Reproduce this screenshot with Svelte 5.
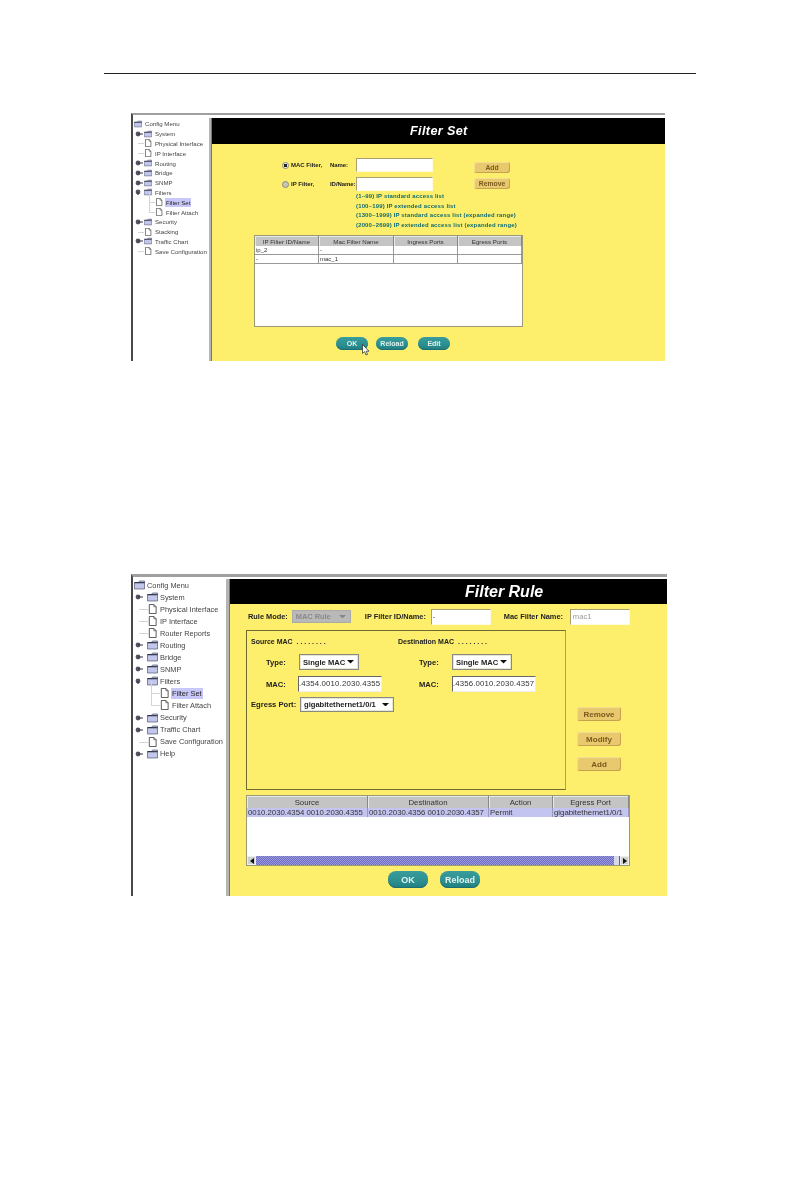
<script lang="ts">
	type Row = { label: string; level: number; kind: 'folder' | 'doc'; toggle?: 'closed' | 'open'; selected?: boolean };

	const folder = (label: string, toggle: 'closed' | 'open' = 'closed'): Row => ({ label, level: 1, kind: 'folder', toggle });
	const doc = (label: string, level = 1, selected = false): Row => ({ label, level, kind: 'doc', selected });
	const root: Row = { label: 'Config Menu', level: 0, kind: 'folder' };

	const setTree: Row[] = [
		root,
		folder('System'),
		doc('Physical Interface'),
		doc('IP Interface'),
		folder('Routing'),
		folder('Bridge'),
		folder('SNMP'),
		folder('Filters', 'open'),
		doc('Filter Set', 2, true),
		doc('Filter Attach', 2),
		folder('Security'),
		doc('Stacking'),
		folder('Traffic Chart'),
		doc('Save Configuration')
	];

	const ruleTree: Row[] = [
		root,
		folder('System'),
		doc('Physical Interface'),
		doc('IP Interface'),
		doc('Router Reports'),
		folder('Routing'),
		folder('Bridge'),
		folder('SNMP'),
		folder('Filters', 'open'),
		doc('Filter Set', 2, true),
		doc('Filter Attach', 2),
		folder('Security'),
		folder('Traffic Chart'),
		doc('Save Configuration'),
		folder('Help')
	];

	const hints = [
		'(1~99) IP standard access list',
		'(100~199) IP extended access list',
		'(1300~1999) IP standard access list (expanded range)',
		'(2000~2699) IP extended access list (expanded range)'
	];
</script>

{#snippet tree(rows: Row[], cls: string)}
	<nav class="tree {cls}">
		{#each rows as row}
			<div class="row lvl-{row.level} {row.kind}">
				{#if row.toggle}
					<svg class="toggle" viewBox="0 0 8 6">
						<circle cx="3" cy="3" r="2.4" fill="#556" />
						<path d={row.toggle === 'open' ? 'M3 3V6' : 'M3 3H8'} stroke="#334" fill="none" />
					</svg>
				{/if}
				{#if row.kind === 'folder'}
					<svg class="icon" viewBox="0 0 11 9">
						<path d="M0.5 2H4.5L5.5 0.5H10.5V8.5H0.5Z" fill="#c2c6ea" stroke="#3a3f58" stroke-width="0.6" />
						<path d="M0.5 2.2H10.5" stroke="#23263c" stroke-width="1.1" />
					</svg>
				{:else}
					<svg class="icon" viewBox="0 0 11 11">
						<path d="M2 0.5H7L9.5 3V10.5H2Z" fill="#fff" stroke="#222" stroke-width="0.8" />
						<path d="M7 0.5V3H9.5" fill="none" stroke="#222" stroke-width="0.6" />
					</svg>
				{/if}
				<span class="label" class:selected={row.selected}>{row.label}</span>
			</div>
		{/each}
	</nav>
{/snippet}

{#snippet arrow()}
	<svg class="arrow" viewBox="0 0 8 4"><path d="M0 0H8L4 4Z" /></svg>
{/snippet}

<main class="page">
	<hr class="rule" />

	<section class="window set">
		{@render tree(setTree, 'tree-set')}
		<div class="splitter"></div>
		<div class="panel">
			<h1>Filter Set</h1>

			<div class="set-form">
				<div class="set-fields">
					<div class="set-row">
						<span class="radio on"></span>
						<b class="set-type">MAC Filter,</b>
						<b class="set-name">Name:</b>
						<input class="text" readonly />
					</div>
					<div class="set-row">
						<span class="radio"></span>
						<b class="set-type">IP Filter,</b>
						<b class="set-name">ID/Name:</b>
						<input class="text" readonly />
					</div>
				</div>
				<div class="set-side">
					<button class="tan">Add</button>
					<button class="tan">Remove</button>
				</div>
			</div>

			<ul class="hints">
				{#each hints as hint}
					<li>{hint}</li>
				{/each}
			</ul>

			<div class="grid set-grid">
				<table>
					<thead>
						<tr>
							<th>IP Filter ID/Name</th>
							<th>Mac Filter Name</th>
							<th>Ingress Ports</th>
							<th>Egress Ports</th>
						</tr>
					</thead>
					<tbody>
						<tr><td>ip_2</td><td>-</td><td></td><td></td></tr>
						<tr><td>-</td><td>mac_1</td><td></td><td></td></tr>
					</tbody>
				</table>
			</div>

			<div class="actions set-actions">
				<button class="teal ok">
					OK
					<svg class="cursor" viewBox="0 0 8 12">
						<path d="M0.5 0.5V9.5L2.6 7.6L4 11L5.5 10.4L4.2 7.2H7Z" fill="#fff" stroke="#222" stroke-width="0.7" />
					</svg>
				</button>
				<button class="teal">Reload</button>
				<button class="teal edit">Edit</button>
			</div>
		</div>
	</section>

	<section class="window rule-win">
		{@render tree(ruleTree, 'tree-rule')}
		<div class="splitter"></div>
		<div class="panel">
			<h1>Filter Rule</h1>

			<div class="rule-top">
				<b>Rule Mode:</b>
				<div class="select disabled mode">MAC Rule {@render arrow()}</div>
				<b class="id-label">IP Filter ID/Name:</b>
				<div class="field top-field">-</div>
				<b class="mac-label">Mac Filter Name:</b>
				<div class="field top-field dim">mac1</div>
			</div>

			<div class="middle">
				<fieldset class="group">
					<div class="side-col src">
						<b class="heading">Source MAC &nbsp;. . . . . . . .</b>
						<div class="pair">
							<b class="pair-label">Type:</b>
							<div class="select type">Single MAC {@render arrow()}</div>
						</div>
						<div class="pair">
							<b class="pair-label">MAC:</b>
							<div class="field mac">.4354.0010.2030.4355</div>
						</div>
						<div class="egress">
							<b>Egress Port:</b>
							<div class="select port">gigabitethernet1/0/1 {@render arrow()}</div>
						</div>
					</div>
					<div class="side-col dst">
						<b class="heading">Destination MAC &nbsp;. . . . . . . .</b>
						<div class="pair">
							<b class="pair-label">Type:</b>
							<div class="select type">Single MAC {@render arrow()}</div>
						</div>
						<div class="pair">
							<b class="pair-label">MAC:</b>
							<div class="field mac">.4356.0010.2030.4357</div>
						</div>
					</div>
				</fieldset>
				<div class="rule-side">
					<button class="tan">Remove</button>
					<button class="tan">Modify</button>
					<button class="tan">Add</button>
				</div>
			</div>

			<div class="grid rule-grid">
				<table>
					<thead>
						<tr>
							<th>Source</th>
							<th>Destination</th>
							<th>Action</th>
							<th>Egress Port</th>
						</tr>
					</thead>
					<tbody>
						<tr class="picked">
							<td>0010.2030.4354 0010.2030.4355</td>
							<td>0010.2030.4356 0010.2030.4357</td>
							<td>Permit</td>
							<td>gigabitethernet1/0/1</td>
						</tr>
					</tbody>
				</table>
				<div class="scrollbar">
					<span class="end"><i class="left"></i></span>
					<span class="thumb"></span>
					<span class="grip"></span>
					<span class="end"><i class="right"></i></span>
				</div>
			</div>

			<div class="actions rule-actions">
				<button class="teal">OK</button>
				<button class="teal">Reload</button>
			</div>
		</div>
	</section>
</main>

<style>
	:global(body) {
		background: #fff;
	}

	.page {
		padding-top: 73px;
		height: 1118px;
		font-family: 'Liberation Sans', Arial, sans-serif;
	}

	.rule {
		margin: 0 0 0 104px;
		width: 592px;
		height: 1px;
		border: 0;
		background: #222;
	}

	.window {
		margin-left: 131px;
		display: flex;
		box-sizing: border-box;
		border-top: 2px solid #a0a0a0;
		border-left: 2px solid #484848;
		padding-top: 3px;
		filter: blur(0.35px);
	}

	.window.set {
		margin-top: 39px;
		width: 534px;
		height: 248px;
	}

	.window.rule-win {
		margin-top: 213px;
		width: 536px;
		height: 322px;
		border-top-width: 3px;
		padding-top: 2px;
	}

	/* tree */
	.tree {
		background: #fff;
		color: #444;
		flex: none;
		overflow: hidden;
	}

	.row {
		position: relative;
		display: flex;
		align-items: center;
		white-space: nowrap;
	}

	.icon {
		flex: none;
	}

	/* connector lines */
	.row.doc::before {
		content: '';
		position: absolute;
		top: 50%;
		height: 1px;
		background: #cfd6d6;
	}

	.row.lvl-2::after {
		content: '';
		position: absolute;
		top: -50%;
		height: 100%;
		width: 1px;
		background: #cfd6d6;
	}

	.tree-set {
		width: 76px;
		font-size: 6.1px;
		padding-top: 1px;
	}

	.tree-set .row {
		height: 9.8px;
	}

	.tree-set .icon {
		width: 8px;
		height: 8px;
		margin: 0 3px 0 1px;
	}

	.tree-set .lvl-1 {
		padding-left: 10px;
	}

	.tree-set .lvl-2 {
		padding-left: 21px;
	}

	.tree-set .doc::before {
		left: 5px;
		width: 6px;
	}

	.tree-set .lvl-2::before {
		left: 16px;
	}

	.tree-set .lvl-2::after {
		left: 16px;
	}

	.tree-rule {
		width: 93px;
		font-size: 7.4px;
	}

	.tree-rule .row {
		height: 12.05px;
	}

	.tree-rule .icon {
		width: 11px;
		height: 10px;
		margin: 0 2px 0 1px;
	}

	.tree-rule .lvl-1 {
		padding-left: 13px;
	}

	.tree-rule .lvl-2 {
		padding-left: 25px;
	}

	.tree-rule .doc::before {
		left: 6px;
		width: 9px;
	}

	.tree-rule .lvl-2::before {
		left: 18px;
	}

	.tree-rule .lvl-2::after {
		left: 18px;
	}

	.toggle {
		position: absolute;
		left: 2px;
		top: 50%;
		width: 8px;
		height: 6px;
		margin-top: -3px;
	}

	.label {
		padding: 1px;
		margin-left: -1px;
	}

	.label.selected {
		background: #c8c8f8;
		color: #222;
	}

	.splitter {
		flex: none;
		background: #b4b4b4;
		border-right: 1px solid #777;
	}

	.set .splitter {
		width: 2px;
	}

	.rule-win .splitter {
		width: 3px;
	}

	/* right side */
	.panel {
		flex: 1;
		min-width: 0;
		display: flex;
		flex-direction: column;
		align-items: flex-start;
		background: #fdef6b;
		color: #222;
	}

	h1 {
		align-self: stretch;
		margin: 0;
		background: #000;
		color: #fff;
		font-style: italic;
		font-weight: 700;
		display: flex;
		align-items: center;
	}

	.set h1 {
		height: 26px;
		font-size: 12.6px;
		letter-spacing: 0.03em;
		padding-left: 198px;
	}

	.rule-win h1 {
		height: 25px;
		font-size: 16px;
		padding-left: 235px;
	}

	b {
		font-weight: 700;
		white-space: nowrap;
	}

	button {
		display: block;
		padding: 0;
		font-family: inherit;
		font-weight: 700;
		cursor: pointer;
		border: 0;
	}

	.teal {
		position: relative;
		background: linear-gradient(#3a9c9c, #2b8f90 60%, #217c80);
		color: #dff2ee;
		border-radius: 8px;
		box-shadow: inset 0 -1px 0 #1c6e72;
	}

	.tan {
		background: #e9c96e;
		color: #7a5a1e;
		border-radius: 3px;
		box-shadow: inset -1px -1px 0 #c8a24e, inset 1px 1px 0 #f3df93;
	}

	.text,
	.field {
		box-sizing: border-box;
		background: #fff;
		border: 1px solid;
		border-color: #a8a070 #fffbe0 #fffbe0 #a8a070;
		outline: none;
		padding: 0;
		margin: 0;
	}

	/* filter set */
	.set-form {
		display: flex;
		padding: 14px 0 0 73px;
	}

	.set-fields {
		display: flex;
		flex-direction: column;
		gap: 5px;
	}

	.set-row {
		display: flex;
		align-items: center;
		height: 14px;
		font-size: 6px;
	}

	.radio {
		flex: none;
		width: 7px;
		height: 7px;
		margin-left: -3px;
		border-radius: 50%;
		box-sizing: border-box;
		background: #c8c8b0;
		border: 1px solid #888;
	}

	.radio.on {
		background: radial-gradient(#222 45%, #eee 55%);
	}

	.set-type {
		width: 39px;
		margin-left: 2px;
	}

	.set-name {
		width: 26px;
		letter-spacing: -0.01em;
	}

	.text {
		width: 77px;
		height: 14px;
	}

	.set-side {
		display: flex;
		flex-direction: column;
		gap: 5px;
		margin: 4px 0 0 41px;
	}

	.set-side .tan {
		width: 36px;
		height: 11px;
		font-size: 6.8px;
	}

	.hints {
		list-style: none;
		margin: 1px 0 0 144px;
		padding: 0;
		color: #0f6a72;
		font-size: 5.95px;
		font-weight: 700;
		line-height: 9.5px;
		letter-spacing: 0.03em;
		white-space: nowrap;
	}

	.grid {
		box-sizing: border-box;
		background: #fff;
		border: 1px solid #9a9a78;
	}

	table {
		width: 100%;
		table-layout: fixed;
		border-collapse: collapse;
	}

	th {
		background: #c4c4c4;
		color: #333;
		font-weight: 400;
		padding: 0;
		border-right: 1px solid #888;
		box-shadow: inset 1px 1px 0 #e8e8e8;
	}

	td {
		padding: 0 0 0 1px;
		color: #333;
		white-space: nowrap;
		overflow: hidden;
		border-right: 1px solid #999;
	}

	.set-grid {
		margin: 5px 0 0 42px;
		width: 269px;
		height: 92px;
	}

	.set-grid th {
		height: 10px;
		font-size: 6.2px;
	}

	.set-grid td {
		height: 8px;
		font-size: 6px;
		line-height: 7px;
		border-bottom: 1px solid #999;
	}

	.set-grid th:nth-child(1),
	.set-grid th:nth-child(3),
	.set-grid th:nth-child(4) {
		width: 63px;
	}

	.actions {
		display: flex;
	}

	.set-actions {
		margin: 10px 0 0 124px;
		gap: 8px;
	}

	.set-actions .teal {
		width: 32px;
		height: 13px;
		font-size: 7px;
	}

	.set-actions .edit {
		margin-left: 2px;
	}

	.cursor {
		position: absolute;
		left: 26px;
		top: 7px;
		width: 8px;
		height: 12px;
	}

	/* filter rule */
	.rule-top {
		display: flex;
		align-items: center;
		height: 17px;
		margin: 4px 0 0 18px;
		font-size: 7.4px;
	}

	.select {
		box-sizing: border-box;
		display: flex;
		align-items: center;
		justify-content: space-between;
		background: #fff;
		border: 1px solid #888;
		box-shadow: inset 0 0 0 1px #e8e8d0;
		font-weight: 700;
		padding: 0 4px 0 3px;
		white-space: nowrap;
		color: #222;
	}

	.arrow {
		flex: none;
		width: 7px;
		height: 3.5px;
		fill: #111;
	}

	.select.disabled {
		background: #b9b9b9;
		color: #8a8a8a;
		border-color: #aaa;
		box-shadow: none;
	}

	.select.disabled .arrow {
		fill: #888;
	}

	.mode {
		width: 59px;
		height: 13px;
		margin-left: 4px;
		font-size: 7.4px;
	}

	.id-label {
		margin-left: 14px;
		width: 66px;
	}

	.top-field {
		width: 60px;
		height: 16px;
		font-size: 7.6px;
		line-height: 14px;
		padding-left: 1px;
		color: #333;
	}

	.mac-label {
		margin-left: 13px;
		width: 66px;
	}

	.top-field.dim {
		color: #999;
		padding-left: 2px;
	}

	.middle {
		display: flex;
		margin: 5px 0 0 16px;
	}

	.group {
		box-sizing: border-box;
		display: flex;
		width: 320px;
		height: 160px;
		margin: 0;
		padding: 6px 0 0 4px;
		border: 1px solid #6e6a30;
		border-right-color: #a8a060;
		font-size: 7.6px;
	}

	.side-col {
		width: 147px;
	}

	.heading {
		display: block;
		height: 11px;
		line-height: 10px;
		font-size: 7px;
	}

	.pair {
		display: flex;
		align-items: center;
		height: 16px;
		margin-top: 6px;
		padding-left: 15px;
	}

	.dst .pair {
		padding-left: 21px;
	}

	.pair-label {
		width: 33px;
	}

	.type {
		width: 60px;
		height: 16px;
		font-size: 7.6px;
	}

	.mac {
		width: 84px;
		height: 16px;
		line-height: 14px;
		font-size: 7.8px;
		letter-spacing: 0.02em;
		color: #333;
		white-space: nowrap;
		overflow: hidden;
		border-color: #666 #eee #eee #666;
	}

	.src .mac {
		margin-left: -1px;
	}

	.egress {
		display: flex;
		align-items: center;
		height: 15px;
		margin-top: 5px;
	}

	.egress b {
		width: 49px;
	}

	.port {
		width: 94px;
		height: 15px;
		font-size: 7.6px;
	}

	.rule-side {
		display: flex;
		flex-direction: column;
		gap: 11px;
		margin: 77px 0 0 11px;
	}

	.rule-side .tan {
		width: 44px;
		height: 14px;
		font-size: 8px;
	}

	.rule-grid {
		display: flex;
		flex-direction: column;
		margin: 5px 0 0 16px;
		width: 384px;
		height: 71px;
	}

	.rule-grid table {
		flex: none;
	}

	.rule-grid th {
		height: 12px;
		font-size: 7.8px;
	}

	.rule-grid td {
		height: 9px;
		font-size: 7.8px;
		line-height: 8px;
		border-right-color: #9898c0;
	}

	.rule-grid th:nth-child(1),
	.rule-grid th:nth-child(2) {
		width: 120px;
	}

	.rule-grid th:nth-child(3) {
		width: 63px;
	}

	.picked td {
		background: #c4c4f0;
	}

	.scrollbar {
		display: flex;
		margin-top: auto;
		height: 9px;
		background: #fff;
	}

	.thumb {
		flex: 1;
		background: repeating-conic-gradient(#6c6cc0 0 25%, #9a9adc 0 50%) 0 0 / 2px 2px;
	}

	.grip {
		flex: none;
		width: 5px;
		background: #d8d8e8;
		border-right: 1px solid #666;
	}

	.end {
		flex: none;
		width: 9px;
		display: flex;
		align-items: center;
		justify-content: center;
		background: #d0d0d0;
		box-shadow: inset 0 0 0 1px #eee;
	}

	.end i {
		width: 0;
		height: 0;
		border-top: 3px solid transparent;
		border-bottom: 3px solid transparent;
	}

	.end .left {
		border-right: 4px solid #111;
	}

	.end .right {
		border-left: 4px solid #111;
	}

	.rule-actions {
		margin: 5px 0 0 158px;
		gap: 12px;
	}

	.rule-actions .teal {
		width: 40px;
		height: 17px;
		font-size: 9px;
	}
</style>
